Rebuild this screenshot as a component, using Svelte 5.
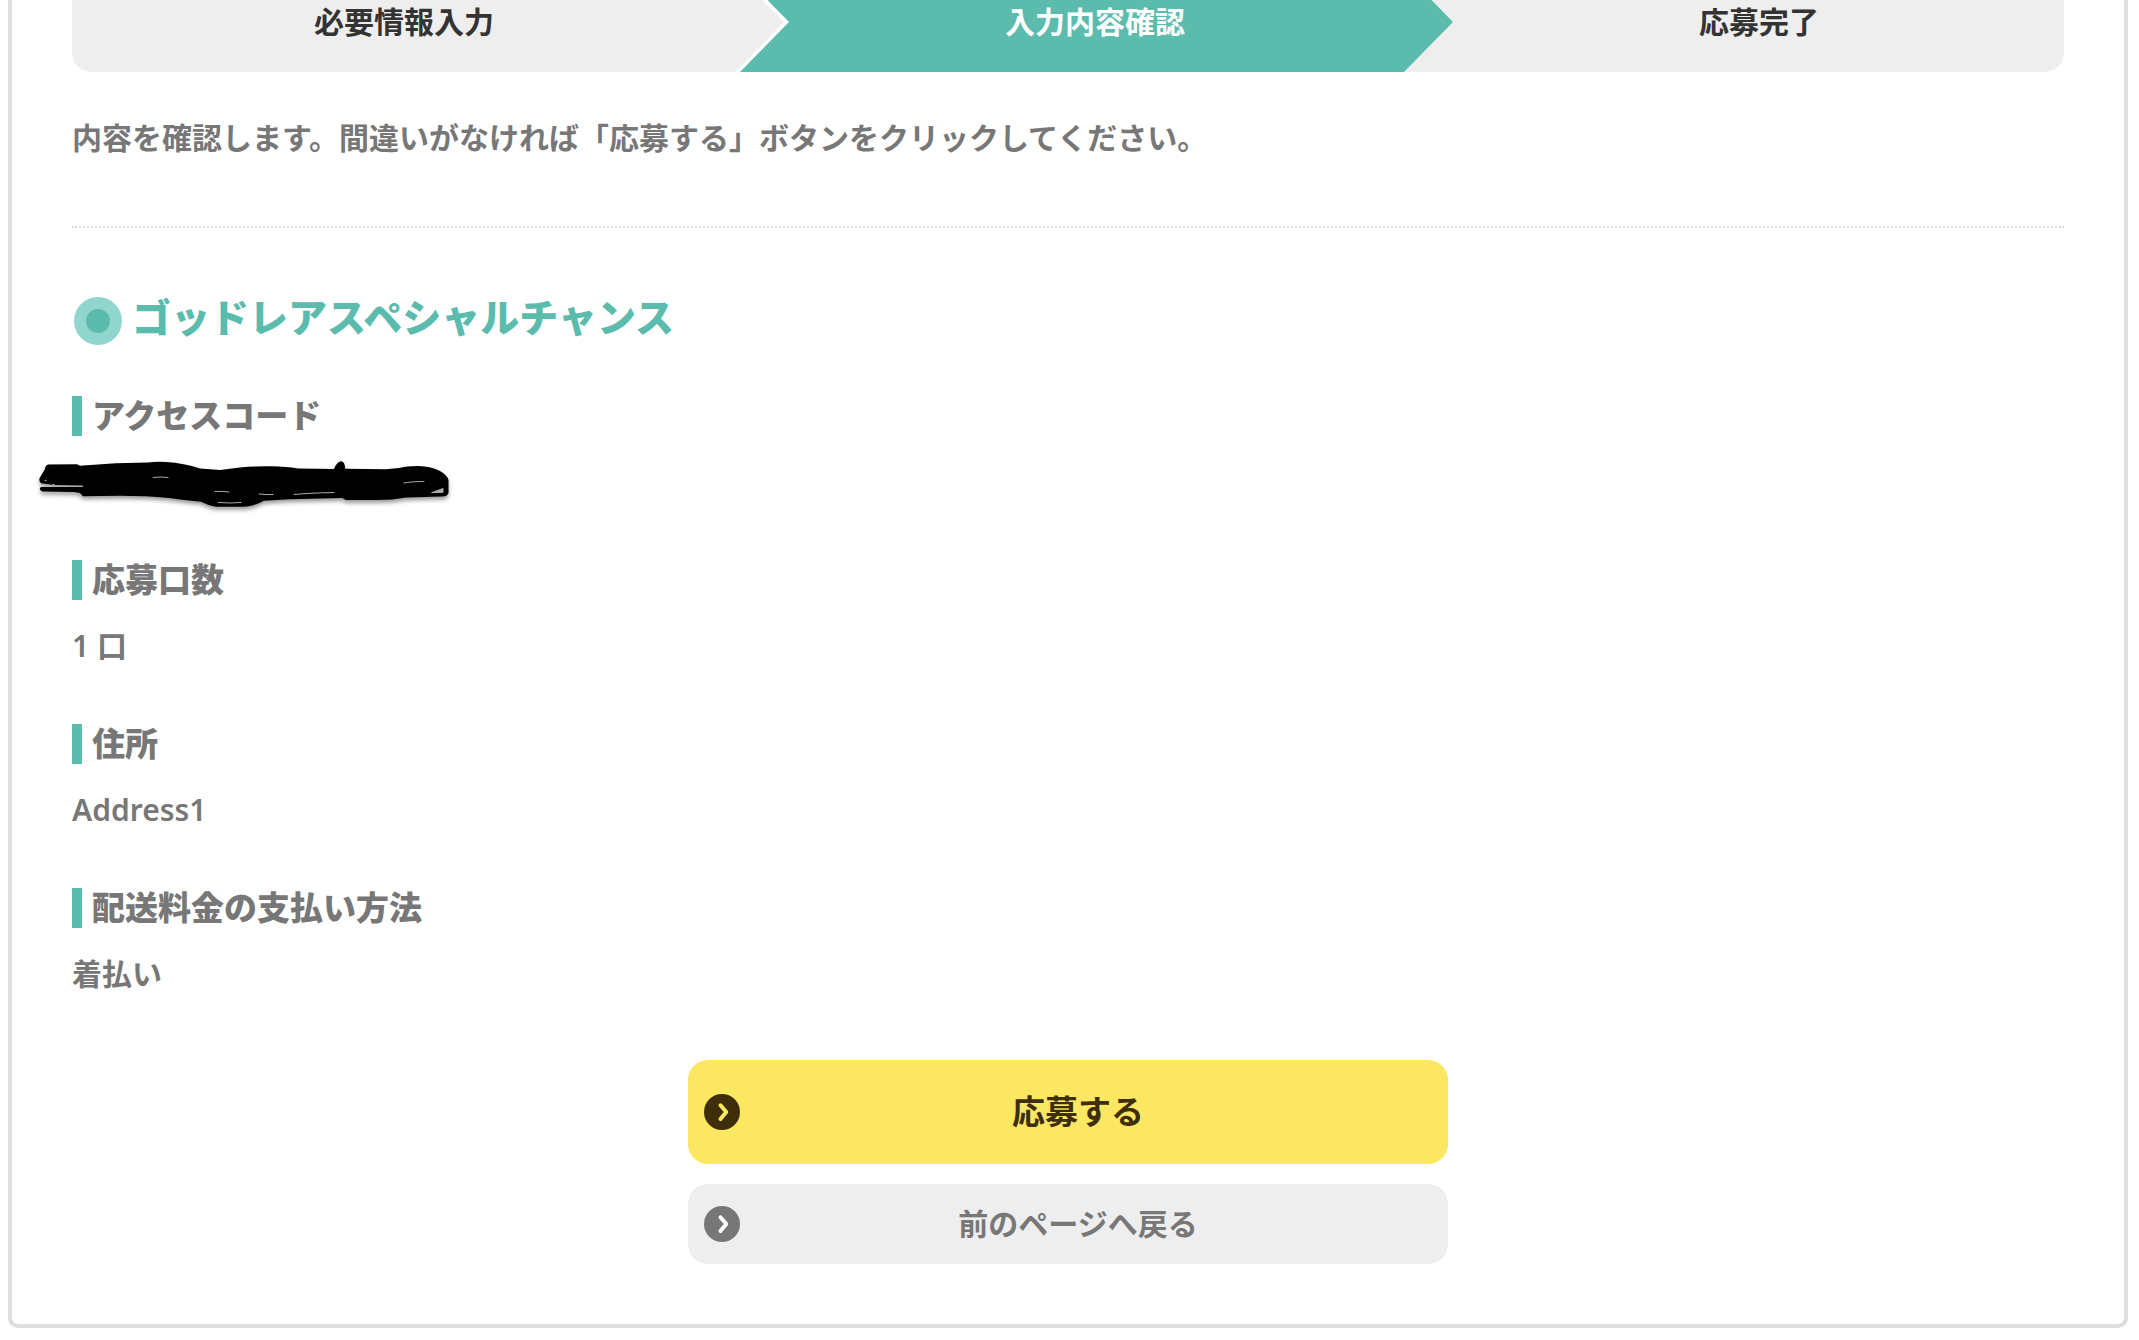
<script lang="ts">
  type Entry = { label: string; value?: string; hidden?: boolean };

  const steps = [
    { label: '必要情報入力', active: false },
    { label: '入力内容確認', active: true },
    { label: '応募完了', active: false }
  ];

  const entries: Entry[] = [
    { label: 'アクセスコード', hidden: true },
    { label: '応募口数', value: '1 口' },
    { label: '住所', value: 'Address1' },
    { label: '配送料金の支払い方法', value: '着払い' }
  ];
</script>

{#snippet arrow()}
  <svg class="arrow" viewBox="0 0 36 36" aria-hidden="true">
    <circle cx="18" cy="18" r="18" />
    <path d="M16.5 11.3 22.3 18l-5.8 7" />
  </svg>
{/snippet}

<main class="card">
  <ol class="steps">
    {#each steps as step}
      <li class="step" class:active={step.active} aria-current={step.active ? 'step' : undefined}>
        {step.label}
      </li>
    {/each}
  </ol>

  <p class="intro">内容を確認します。間違いがなければ「応募する」ボタンをクリックしてください。</p>

  <h2>
    <svg class="mark" viewBox="0 0 48 48" aria-hidden="true">
      <circle class="ring" cx="24" cy="24" r="24" />
      <circle class="dot" cx="24" cy="24" r="12" />
    </svg>
    ゴッドレアスペシャルチャンス
  </h2>

  <dl>
    {#each entries as entry}
      <div class="entry">
        <dt>{entry.label}</dt>
        <dd>
          {#if entry.hidden}
            <svg class="scribble" viewBox="0 0 420 60" aria-hidden="true">
              <path
                d="M12 6.500 41 6.300 44 7.700 80 5.300 112 4.500Q120 3.500 130 4 148 5 164 10.500L184 12 200 10Q215 8 235 8.300 250 8.500 262 10.500L298 11Q301 3.500 305.500 3.300 309 4 309 10.700L350 11.300 363 10Q370 8 382 8 396 8.500 404 13 411 17 412.500 22L412.500 35Q411 39 405 38.500L370 39.500Q357 42 340 42L310 42 306 40 254 41.300 228 42.700Q216 49 205 48.700L180 48.700Q172 47.500 165 43.700 150 42.500 133 40 110 37.700 84 37.700L47 38.300 44 35 38 34 6 33.500Q2 31 5 29L47 29 47 27.500 18 27 5 25.300Q2.500 23 3.700 20L9 11Q9 8 12 6.500Z"
              />
              <path
                class="gap"
                d="M117 19.500Q124 18.500 132 19.500M179 33.500Q186 33 193 34M182 44.500Q194 45.500 205 44.500M223 36Q230 37 237 36.500M258 36.500Q274 35 298 34.500M368 25Q375 23.500 388 23.500M9 22.500H10M17 26.500H18"
              />
              <path class="gap wedge" d="M396 34.500 407 30.500V34Z" />
            </svg>
          {:else}
            {entry.value}
          {/if}
        </dd>
      </div>
    {/each}
  </dl>

  <div class="actions">
    <button class="submit" type="submit">
      {@render arrow()}
      <span>応募する</span>
    </button>
    <button class="back" type="button">
      {@render arrow()}
      <span>前のページへ戻る</span>
    </button>
  </div>
</main>

<style>
  :global(body) {
    margin: 0;
    background: #fff;
  }

  .card {
    margin: -28px 11px 12px 8px;
    padding: 0 60px 60px;
    border: 4px solid #ddd;
    border-top: 0;
    border-radius: 0 0 10px 10px;
    color: #777;
    font-family: 'Noto Sans', 'Noto Sans CJK JP', sans-serif;
    font-size: 30px;
    font-weight: 600;
    line-height: 52px;
  }

  .steps {
    display: grid;
    grid-template-columns: repeat(3, 1fr);
    margin: 0;
    padding: 0;
    overflow: hidden;
    border-radius: 20px;
    background: #eee;
    color: #333;
    font-weight: 700;
    line-height: 100px;
    list-style: none;
  }

  .step {
    position: relative;
    background: #eee;
    text-align: center;
  }

  .step:not(:first-child) {
    padding-left: 54px;
  }

  .step.active {
    background: #5bbbad;
    color: #fff;
  }

  /* arrow heads reach over the next step */
  .step:not(:last-child)::before,
  .step:not(:last-child)::after {
    content: '';
    position: absolute;
    z-index: 1;
    top: 0;
    left: calc(100% - 1px);
    width: 54px;
    height: 100%;
    background: #fff;
    clip-path: polygon(0 0, 5px 0, 100% 50%, 5px 100%, 0 100%);
  }

  .step:not(:last-child)::after {
    width: 49px;
    background: #eee;
    clip-path: polygon(0 0, 100% 50%, 0 100%);
  }

  .step.active::before,
  .step.active::after {
    background: #5bbbad;
  }

  .intro {
    margin: 40px 0 0;
    padding-bottom: 62px;
    border-bottom: 2px dotted #ddd;
  }

  h2 {
    display: flex;
    align-items: flex-end;
    gap: 10px;
    margin: 60px 0 51px;
    padding-left: 2px;
    color: #5bbbad;
    font-size: 39px;
    font-weight: 900;
    line-height: 57px;
  }

  .mark {
    flex: none;
    width: 48px;
    height: 48px;
  }

  .ring {
    fill: #90d6ce;
  }

  .dot {
    fill: #5bbbad;
  }

  dl {
    display: grid;
    gap: 52px;
    margin: 0;
  }

  dt {
    margin-bottom: 20px;
    padding-left: 10px;
    border-left: 10px solid #5bbbad;
    font-size: 33px;
    font-weight: 900;
    line-height: 40px;
  }

  dd {
    position: relative;
    min-height: 52px;
    margin: 0;
  }

  /* redaction stroke, drawn past the text edge */
  .scribble {
    position: absolute;
    top: 2px;
    left: -36px;
    width: 420px;
    height: 60px;
    filter: drop-shadow(0 3px 2px rgba(0, 0, 0, 0.4));
  }

  .gap {
    fill: none;
    stroke: #aaa;
    stroke-width: 1;
    stroke-linecap: round;
  }

  .gap.wedge {
    fill: #aaa;
  }

  .actions {
    display: grid;
    gap: 20px;
    max-width: 760px;
    margin: 60px auto 0;
  }

  button {
    display: flex;
    align-items: center;
    padding: 0 16px;
    border: 0;
    border-radius: 20px;
    font: inherit;
    cursor: pointer;
  }

  button span {
    flex: 1;
    padding-right: 16px;
    text-align: center;
  }

  .submit {
    background: #fce762;
    color: #3e2f0a;
    font-size: 33px;
    line-height: 104px;
  }

  .back {
    background: #eee;
    color: #777;
    line-height: 80px;
  }

  .arrow {
    flex: none;
    width: 36px;
    height: 36px;
    fill: currentColor;
  }

  .arrow path {
    fill: none;
    stroke: #fff;
    stroke-width: 4;
    stroke-linecap: round;
    stroke-linejoin: round;
  }

  .submit .arrow path {
    stroke: #fce762;
  }
</style>
